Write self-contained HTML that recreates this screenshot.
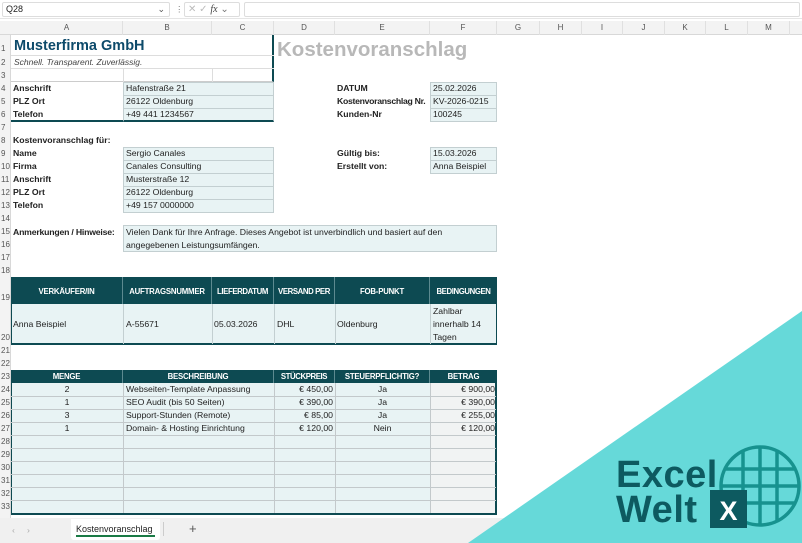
<!DOCTYPE html>
<html><head><meta charset="utf-8"><style>
*{margin:0;padding:0;box-sizing:border-box}
body{width:802px;height:543px;overflow:hidden;background:#fff;font-family:"Liberation Sans",sans-serif;font-size:8.7px;color:#222;position:relative}
.a{position:absolute;white-space:nowrap;line-height:13px}
.f{background:#e8f3f4;border:1px solid #c3cfd1}
.b{font-weight:bold}
.h{background:#0d4a52;color:#fff;font-weight:bold;text-align:center;border-right:1px solid #5d8a90;font-size:7.8px;letter-spacing:-0.2px;overflow:hidden}
.rn{position:absolute;left:0;width:11px;font-size:8px;color:#555;text-align:left;padding-left:1px;line-height:13px}
.ch{position:absolute;top:21px;height:14px;font-size:8px;color:#555;text-align:center;line-height:14px;border-right:1px solid #e0e0e0}
</style></head><body>
<div class="a" style="left:0;top:0;width:802px;height:19px;background:#fff;border-bottom:1px solid #e5e5e5"></div>
<div class="a" style="left:2px;top:2px;width:168px;height:15px;border:1px solid #ddd;border-radius:2px;padding-left:3px;line-height:13px;font-size:9px">Q28<span style="position:absolute;right:4px;color:#555">⌄</span></div>
<div class="a" style="left:175px;top:2px;color:#777;line-height:15px">⋮</div>
<div class="a" style="left:184px;top:2px;width:56px;height:15px;border:1px solid #ddd;border-radius:2px;color:#bbb;line-height:14px;padding-left:3px;font-size:10px">✕ ✓ <i style="color:#444;font-family:'Liberation Serif',serif">fx</i> <span style="color:#777">⌄</span></div>
<div class="a" style="left:244px;top:2px;width:556px;height:15px;border:1px solid #ddd;border-radius:2px"></div>
<div class="a" style="left:0;top:21px;width:802px;height:14px;background:#f3f3f3;border-bottom:1px solid #d8d8d8"></div>
<div class="ch" style="left:11px;width:112px">A</div><div class="ch" style="left:123px;width:89px">B</div><div class="ch" style="left:212px;width:62px">C</div><div class="ch" style="left:274px;width:61px">D</div><div class="ch" style="left:335px;width:95px">E</div><div class="ch" style="left:430px;width:67px">F</div><div class="ch" style="left:497px;width:43px">G</div><div class="ch" style="left:540px;width:42px">H</div><div class="ch" style="left:582px;width:41px">I</div><div class="ch" style="left:623px;width:42px">J</div><div class="ch" style="left:665px;width:41px">K</div><div class="ch" style="left:706px;width:42px">L</div><div class="ch" style="left:748px;width:42px">M</div>
<div class="a" style="left:0;top:35px;width:11px;height:483px;background:#f3f3f3;border-right:1px solid #d8d8d8"></div>
<div class="rn" style="top:42px">1</div><div class="rn" style="top:56px">2</div><div class="rn" style="top:69px">3</div><div class="rn" style="top:82px">4</div><div class="rn" style="top:95px">5</div><div class="rn" style="top:108px">6</div><div class="rn" style="top:121px">7</div><div class="rn" style="top:134px">8</div><div class="rn" style="top:147px">9</div><div class="rn" style="top:160px">10</div><div class="rn" style="top:173px">11</div><div class="rn" style="top:186px">12</div><div class="rn" style="top:199px">13</div><div class="rn" style="top:212px">14</div><div class="rn" style="top:225px">15</div><div class="rn" style="top:238px">16</div><div class="rn" style="top:251px">17</div><div class="rn" style="top:264px">18</div><div class="rn" style="top:291px">19</div><div class="rn" style="top:331px">20</div><div class="rn" style="top:344px">21</div><div class="rn" style="top:357px">22</div><div class="rn" style="top:370px">23</div><div class="rn" style="top:383px">24</div><div class="rn" style="top:396px">25</div><div class="rn" style="top:409px">26</div><div class="rn" style="top:422px">27</div><div class="rn" style="top:435px">28</div><div class="rn" style="top:448px">29</div><div class="rn" style="top:461px">30</div><div class="rn" style="top:474px">31</div><div class="rn" style="top:487px">32</div><div class="rn" style="top:500px">33</div>
<div class="a" style="left:11px;top:35px;width:263px;height:47px;border-bottom:1px solid #ccc;border-right:2px solid #0d4a52"></div>
<div class="a" style="left:11px;top:55px;width:263px;height:1px;background:#ddd"></div>
<div class="a" style="left:11px;top:68px;width:263px;height:1px;background:#ddd"></div>
<div class="a" style="left:123px;top:69px;width:1px;height:13px;background:#ddd"></div>
<div class="a" style="left:212px;top:69px;width:1px;height:13px;background:#ddd"></div>
<div class="a" style="left:14px;top:37px;font-size:14.5px;line-height:18px;font-weight:bold;color:#0d4a6a">Musterfirma GmbH</div>
<div class="a" style="left:14px;top:56px;font-style:italic;color:#444;font-size:8.5px">Schnell. Transparent. Zuverlässig.</div>
<div class="a" style="left:277px;top:37px;font-size:20.5px;line-height:26px;font-weight:bold;color:#b8b8b8">Kostenvoranschlag</div>
<div class="a f" style="left:123px;top:82px;width:151px;height:40px;border-bottom:2px solid #0d4a52"></div>
<div class="a" style="left:11px;top:120px;width:112px;height:2px;background:#0d4a52"></div>
<div class="a" style="left:123px;top:95px;width:151px;height:1px;background:#c3cfd1"></div><div class="a" style="left:123px;top:108px;width:151px;height:1px;background:#c3cfd1"></div>
<div class="a b" style="left:13px;top:82px">Anschrift</div><div class="a" style="left:126px;top:82px">Hafenstraße 21</div>
<div class="a b" style="left:13px;top:95px">PLZ Ort</div><div class="a" style="left:126px;top:95px">26122 Oldenburg</div>
<div class="a b" style="left:13px;top:108px">Telefon</div><div class="a" style="left:126px;top:108px">+49 441 1234567</div>
<div class="a f" style="left:430px;top:82px;width:67px;height:40px"></div>
<div class="a" style="left:430px;top:95px;width:67px;height:1px;background:#c3cfd1"></div><div class="a" style="left:430px;top:108px;width:67px;height:1px;background:#c3cfd1"></div>
<div class="a b" style="left:337px;top:82px">DATUM</div><div class="a" style="left:433px;top:82px">25.02.2026</div>
<div class="a b" style="left:337px;top:95px;letter-spacing:-0.3px">Kostenvoranschlag Nr.</div><div class="a" style="left:433px;top:95px">KV-2026-0215</div>
<div class="a b" style="left:337px;top:108px">Kunden-Nr</div><div class="a" style="left:433px;top:108px">100245</div>
<div class="a f" style="left:430px;top:147px;width:67px;height:27px"></div>
<div class="a" style="left:430px;top:160px;width:67px;height:1px;background:#c3cfd1"></div>
<div class="a b" style="left:337px;top:147px">Gültig bis:</div><div class="a" style="left:433px;top:147px">15.03.2026</div>
<div class="a b" style="left:337px;top:160px">Erstellt von:</div><div class="a" style="left:433px;top:160px">Anna Beispiel</div>
<div class="a b" style="left:13px;top:134px">Kostenvoranschlag für:</div>
<div class="a f" style="left:123px;top:147px;width:151px;height:66px"></div>
<div class="a" style="left:123px;top:160px;width:151px;height:1px;background:#c3cfd1"></div><div class="a" style="left:123px;top:173px;width:151px;height:1px;background:#c3cfd1"></div><div class="a" style="left:123px;top:186px;width:151px;height:1px;background:#c3cfd1"></div><div class="a" style="left:123px;top:199px;width:151px;height:1px;background:#c3cfd1"></div>
<div class="a b" style="left:13px;top:147px">Name</div><div class="a" style="left:126px;top:147px">Sergio Canales</div>
<div class="a b" style="left:13px;top:160px">Firma</div><div class="a" style="left:126px;top:160px">Canales Consulting</div>
<div class="a b" style="left:13px;top:173px">Anschrift</div><div class="a" style="left:126px;top:173px">Musterstraße 12</div>
<div class="a b" style="left:13px;top:186px">PLZ Ort</div><div class="a" style="left:126px;top:186px">26122 Oldenburg</div>
<div class="a b" style="left:13px;top:199px">Telefon</div><div class="a" style="left:126px;top:199px">+49 157 0000000</div>
<div class="a b" style="left:13px;top:226px;letter-spacing:-0.2px">Anmerkungen / Hinweise:</div>
<div class="a f" style="left:123px;top:225px;width:374px;height:27px"></div>
<div class="a" style="left:126px;top:226px">Vielen Dank für Ihre Anfrage. Dieses Angebot ist unverbindlich und basiert auf den</div>
<div class="a" style="left:126px;top:239px">angegebenen Leistungsumfängen.</div>
<div class="a" style="left:11px;top:277px;width:486px;height:68px;border:1px solid #0d4a52;border-bottom:2px solid #0d4a52;background:#e8f3f4"></div>
<div class="a h" style="left:11px;top:277px;width:112px;height:27px;line-height:30px">VERKÄUFER/IN</div>
<div class="a h" style="left:123px;top:277px;width:89px;height:27px;line-height:30px">AUFTRAGSNUMMER</div>
<div class="a h" style="left:212px;top:277px;width:62px;height:27px;line-height:30px;letter-spacing:-0.4px">LIEFERDATUM</div>
<div class="a h" style="left:274px;top:277px;width:61px;height:27px;line-height:30px;letter-spacing:-0.4px">VERSAND PER</div>
<div class="a h" style="left:335px;top:277px;width:95px;height:27px;line-height:30px">FOB-PUNKT</div>
<div class="a h" style="left:430px;top:277px;width:67px;height:27px;line-height:30px;border-right:0;letter-spacing:-0.4px">BEDINGUNGEN</div>
<div class="a" style="left:123px;top:304px;width:1px;height:40px;background:#c3cfd1"></div><div class="a" style="left:212px;top:304px;width:1px;height:40px;background:#c3cfd1"></div><div class="a" style="left:274px;top:304px;width:1px;height:40px;background:#c3cfd1"></div><div class="a" style="left:335px;top:304px;width:1px;height:40px;background:#c3cfd1"></div><div class="a" style="left:430px;top:304px;width:1px;height:40px;background:#c3cfd1"></div>
<div class="a" style="left:13px;top:318px">Anna Beispiel</div><div class="a" style="left:126px;top:318px">A-55671</div><div class="a" style="left:214px;top:318px">05.03.2026</div><div class="a" style="left:277px;top:318px">DHL</div><div class="a" style="left:337px;top:318px">Oldenburg</div>
<div class="a" style="left:433px;top:305px">Zahlbar</div><div class="a" style="left:433px;top:318px">innerhalb 14</div><div class="a" style="left:433px;top:331px">Tagen</div>
<div class="a" style="left:11px;top:370px;width:486px;height:145px;border:1px solid #0d4a52;border-bottom:2px solid #0d4a52;border-right:2px solid #0d4a52;background:#e8f3f4"></div>
<div class="a" style="left:430px;top:383px;width:65px;height:130px;background:#f1f3f3"></div>
<div class="a h" style="left:11px;top:370px;width:112px;height:13px">MENGE</div>
<div class="a h" style="left:123px;top:370px;width:151px;height:13px">BESCHREIBUNG</div>
<div class="a h" style="left:274px;top:370px;width:61px;height:13px;letter-spacing:-0.4px">STÜCKPREIS</div>
<div class="a h" style="left:335px;top:370px;width:95px;height:13px">STEUERPFLICHTIG?</div>
<div class="a h" style="left:430px;top:370px;width:67px;height:13px;border-right:0">BETRAG</div>
<div class="a" style="left:123px;top:383px;width:1px;height:130px;background:#c3c9cb"></div><div class="a" style="left:274px;top:383px;width:1px;height:130px;background:#c3c9cb"></div><div class="a" style="left:335px;top:383px;width:1px;height:130px;background:#c3c9cb"></div><div class="a" style="left:430px;top:383px;width:1px;height:130px;background:#c3c9cb"></div>
<div class="a" style="left:11px;top:396px;width:485px;height:1px;background:#c3c9cb"></div><div class="a" style="left:11px;top:409px;width:485px;height:1px;background:#c3c9cb"></div><div class="a" style="left:11px;top:422px;width:485px;height:1px;background:#c3c9cb"></div><div class="a" style="left:11px;top:435px;width:485px;height:1px;background:#c3c9cb"></div><div class="a" style="left:11px;top:448px;width:485px;height:1px;background:#c3c9cb"></div><div class="a" style="left:11px;top:461px;width:485px;height:1px;background:#c3c9cb"></div><div class="a" style="left:11px;top:474px;width:485px;height:1px;background:#c3c9cb"></div><div class="a" style="left:11px;top:487px;width:485px;height:1px;background:#c3c9cb"></div><div class="a" style="left:11px;top:500px;width:485px;height:1px;background:#c3c9cb"></div>
<div class="a" style="left:11px;top:383px;width:112px;text-align:center">2</div><div class="a" style="left:126px;top:383px">Webseiten-Template Anpassung</div><div class="a" style="left:274px;top:383px;width:59px;text-align:right">€ 450,00</div><div class="a" style="left:335px;top:383px;width:95px;text-align:center">Ja</div><div class="a" style="left:430px;top:383px;width:65px;text-align:right">€ 900,00</div>
<div class="a" style="left:11px;top:396px;width:112px;text-align:center">1</div><div class="a" style="left:126px;top:396px">SEO Audit (bis 50 Seiten)</div><div class="a" style="left:274px;top:396px;width:59px;text-align:right">€ 390,00</div><div class="a" style="left:335px;top:396px;width:95px;text-align:center">Ja</div><div class="a" style="left:430px;top:396px;width:65px;text-align:right">€ 390,00</div>
<div class="a" style="left:11px;top:409px;width:112px;text-align:center">3</div><div class="a" style="left:126px;top:409px">Support-Stunden (Remote)</div><div class="a" style="left:274px;top:409px;width:59px;text-align:right">€ 85,00</div><div class="a" style="left:335px;top:409px;width:95px;text-align:center">Ja</div><div class="a" style="left:430px;top:409px;width:65px;text-align:right">€ 255,00</div>
<div class="a" style="left:11px;top:422px;width:112px;text-align:center">1</div><div class="a" style="left:126px;top:422px">Domain- &amp; Hosting Einrichtung</div><div class="a" style="left:274px;top:422px;width:59px;text-align:right">€ 120,00</div><div class="a" style="left:335px;top:422px;width:95px;text-align:center">Nein</div><div class="a" style="left:430px;top:422px;width:65px;text-align:right">€ 120,00</div>
<div class="a" style="left:0;top:518px;width:802px;height:25px;background:#f0f0f0"></div>
<div class="a" style="left:12px;top:524px;color:#aaa">‹ &nbsp;&nbsp;&nbsp; ›</div>
<div class="a" style="left:71px;top:519px;width:89px;height:21px;background:#fff;border-radius:0 0 3px 3px"></div>
<div class="a" style="left:76px;top:523px;font-size:9px;color:#222">Kostenvoranschlag</div>
<div class="a" style="left:76px;top:535px;width:79px;height:2px;background:#1a7a45"></div>
<div class="a" style="left:163px;top:522px;width:1px;height:14px;background:#ccc"></div>
<div class="a" style="left:189px;top:522px;font-size:13px;color:#555">+</div>
<svg class="a" style="left:0;top:0" width="802" height="543" viewBox="0 0 802 543">
<polygon points="802,311 802,543 468,543" fill="#66d9d9"/>
<g stroke="#17928f" stroke-width="3.5" fill="none">
<circle cx="760" cy="486" r="39"/>
<line x1="743" y1="451" x2="743" y2="521"/><line x1="760" y1="447" x2="760" y2="525"/><line x1="777" y1="451" x2="777" y2="521"/>
<line x1="726" y1="469" x2="794" y2="469"/><line x1="721" y1="486" x2="799" y2="486"/><line x1="726" y1="503" x2="794" y2="503"/>
</g>
<text x="616" y="487" font-family="Liberation Sans,sans-serif" font-weight="bold" font-size="38" fill="#0d5a60" letter-spacing="0.5">Excel</text>
<text x="616" y="522" font-family="Liberation Sans,sans-serif" font-weight="bold" font-size="38" fill="#0d5a60" letter-spacing="0.5">Welt</text>
<rect x="710" y="490" width="37" height="38" fill="#0d5a60"/>
<text x="728.5" y="520" text-anchor="middle" font-family="Liberation Sans,sans-serif" font-weight="bold" font-size="27" fill="#fff">X</text>
</svg>
</body></html>
